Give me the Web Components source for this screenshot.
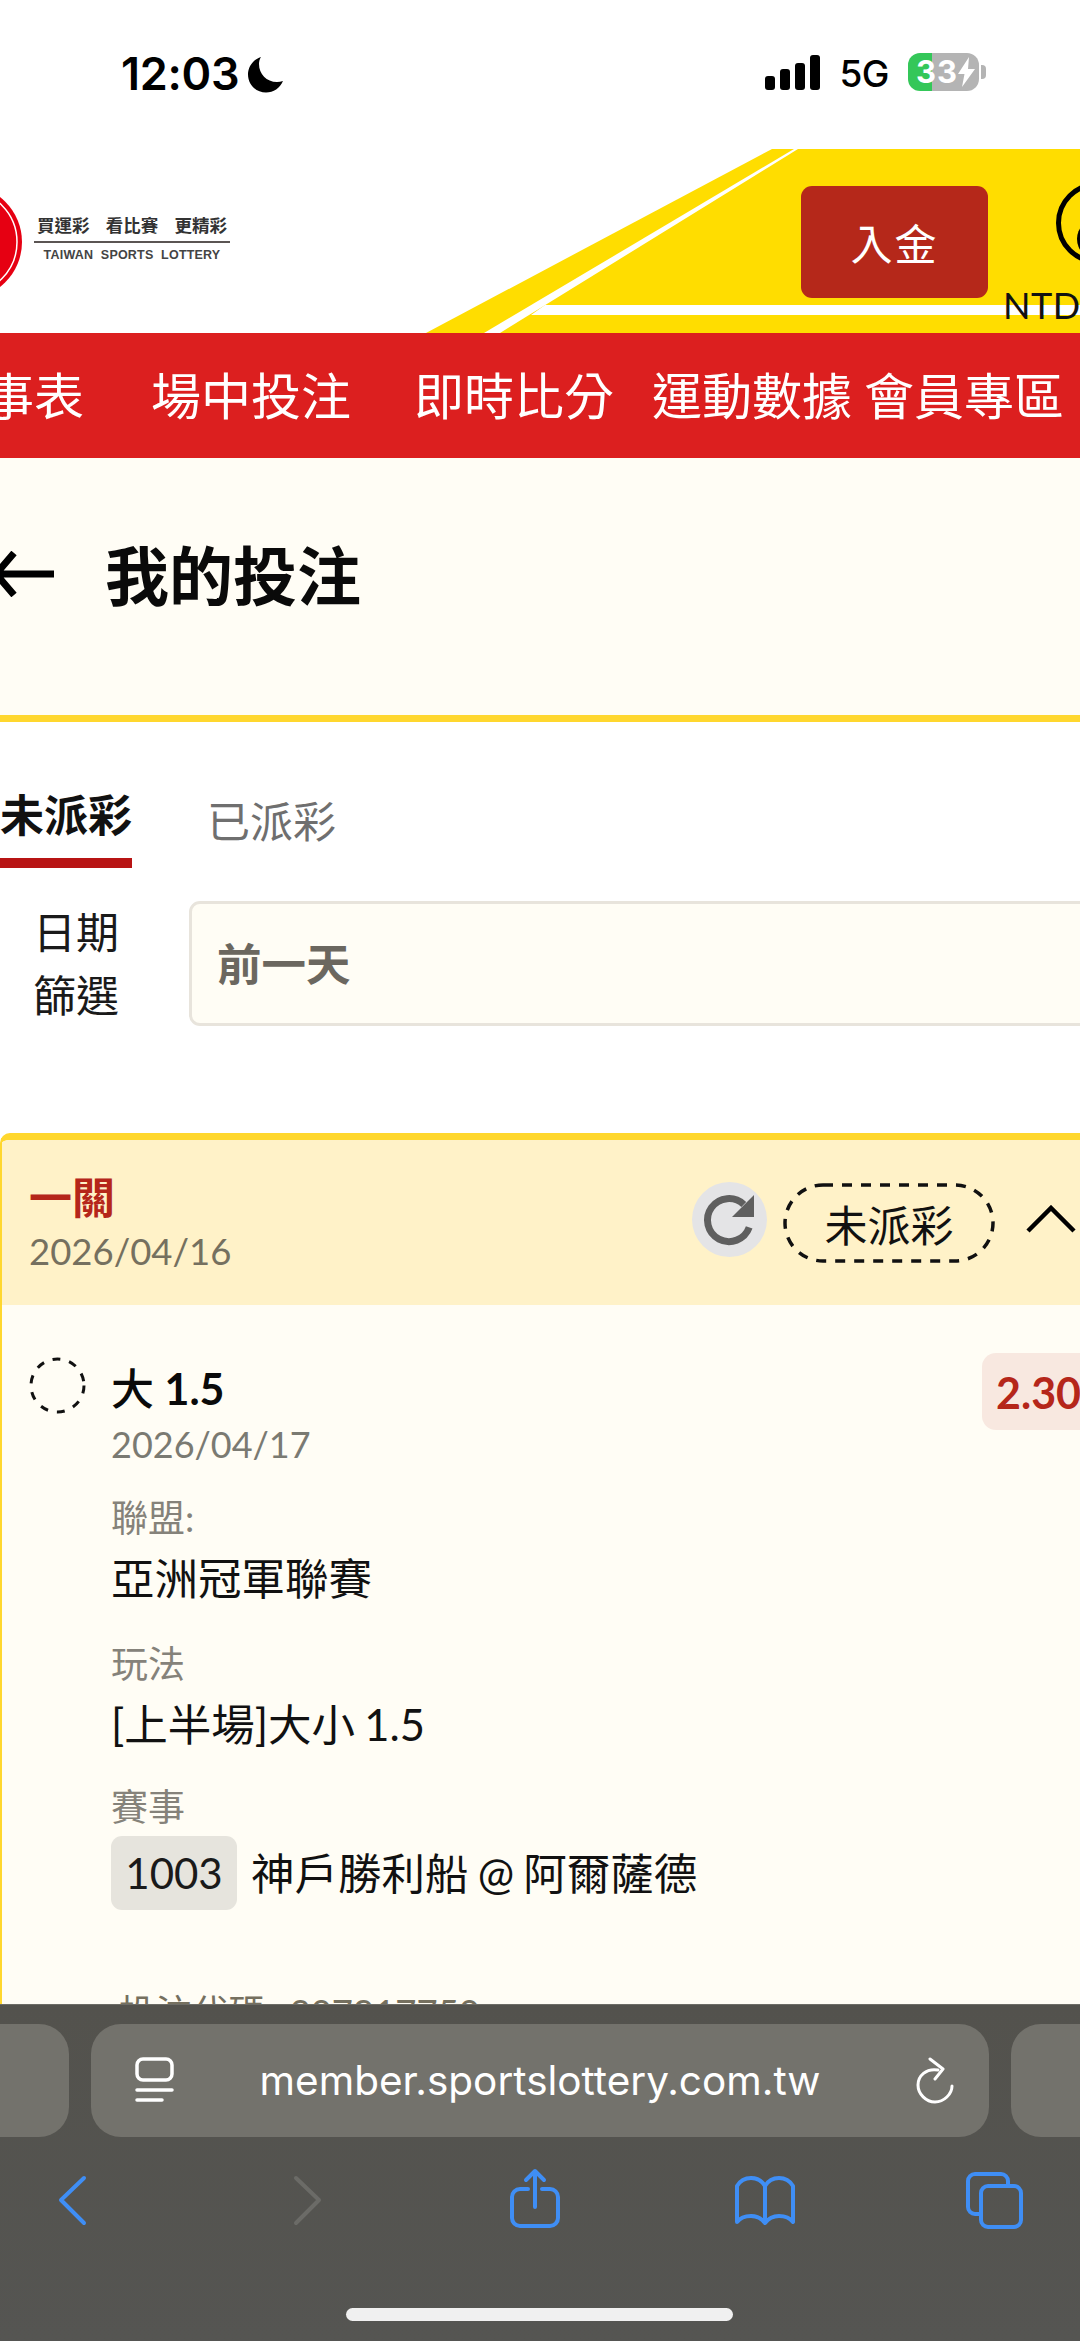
<!DOCTYPE html>
<html lang="zh-Hant">
<head>
<meta charset="utf-8">
<title>我的投注</title>
<style>
  html, body { margin: 0; padding: 0; width: 1080px; height: 2341px; overflow: hidden; background: #ffffff; }
  body { font-family: Lato, "Noto Sans CJK TC", sans-serif; color: #000; }
  my-bets-page { --cream: #fffdf5; --red: #b5261a; }
</style>
</head>
<body>
<my-bets-page>
  <status-bar></status-bar>
  <site-header></site-header>
  <main-nav></main-nav>
  <page-title>我的投注</page-title>
  <bet-tabs></bet-tabs>
  <date-filter></date-filter>
  <bet-card>
    <bet-leg>
      <bet-field gap="24" label="聯盟:" >亞洲冠軍聯賽</bet-field>
      <bet-field gap="30" label="玩法">[上半場]大小 1.5</bet-field>
      <bet-field gap="27" label="賽事"><match-line code="1003">神戶勝利船 @ 阿爾薩德</match-line></bet-field>
      <bet-code><span>投注代碼:</span> 307917750</bet-code>
    </bet-leg>
  </bet-card>
</my-bets-page>
<safari-bar></safari-bar>

<script>
(() => {
  // small helper, every element is the same: open shadow root + static html
  const define = (name, html) => {
    class El extends HTMLElement {
      constructor() {
        super();
        this.attachShadow({ mode: "open" });
        this.shadowRoot.innerHTML = html;
      }
    }
    customElements.define(name, El);
  };

  define("my-bets-page", `
    <style>
      :host { display: block; width: 1080px; height: 2341px; overflow: hidden; }
    </style>
    <slot></slot>
  `);

  define("status-bar", `
    <style>
      :host { display: flex; align-items: flex-start; height: 149px; box-sizing: border-box; padding: 0 94px 0 121px; font-family: Inter, Roboto, sans-serif; }
      .time { font-size: 45px; font-weight: 600; line-height: 46px; margin-top: 51px; letter-spacing: -0.3px; }
      .moon { margin: 57px 0 0 9px; }
      .right { margin-left: auto; display: flex; align-items: flex-start; }
      .signal { margin-top: 55px; }
      .net { font-size: 37px; font-weight: 500; line-height: 40px; margin: 54px 0 0 18px; letter-spacing: -0.5px; }
      .battery { display: flex; align-items: center; box-sizing: border-box; width: 71px; height: 38px; margin: 53px 0 0 19px; padding-left: 8px; border-radius: 12px; background: linear-gradient(90deg, #34c759 24px, #b4b4b4 24px); color: #fff; font-size: 31px; font-weight: 700; line-height: 38px; letter-spacing: 1px; }
      .tip { width: 5px; height: 14px; margin: 65px 0 0 2px; border-radius: 0 4px 4px 0; background: #b4b4b4; }
    </style>
    <span class="time">12:03</span>
    <svg class="moon" width="36" height="36" viewBox="0 0 36 36"><path d="M13 0C5 2.500 0 9.500 0 17.500 0 27.500 8 35.500 18 35.500c7.500 0 14-4.500 17-11.500-2 .7-4 1-6 1C18.500 25 11 17 11 7c0-2.500.7-5 2-7z"/></svg>
    <span class="right">
      <svg class="signal" width="56" height="35" viewBox="0 0 56 35"><rect x="0" y="21" width="10" height="14" rx="3"/><rect x="15" y="14" width="10" height="21" rx="3"/><rect x="30" y="8" width="10" height="27" rx="3"/><rect x="45" y="0" width="10" height="35" rx="3"/></svg>
      <span class="net">5G</span>
      <span class="battery">33<svg width="17" height="30" viewBox="0 0 17 30"><path d="M11 0 0 17h6.500L4 30 17 12h-7z" fill="#fff"/></svg></span>
      <span class="tip"></span>
    </span>
  `);

  define("site-header", `
    <style>
      :host { display: flex; position: relative; align-items: flex-start; width: 1080px; height: 184px; overflow: hidden; background: #fff; }
      .bg { position: absolute; left: 0; top: 0; }
      .mark { position: relative; flex: none; margin-top: 48px; }
      .slogan { position: relative; flex: none; width: 196px; margin: 67px 0 0 11px; color: #333; font-family: "Liberation Sans", sans-serif; }
      .zh { display: flex; justify-content: space-between; padding: 0 3px; font: 700 17.500px/18px "Noto Sans CJK TC", sans-serif; }
      .rule { height: 2px; margin-top: 7px; background: #5b5553; }
      .en { margin-top: 5px; font-size: 12.500px; font-weight: 700; line-height: 14px; text-align: center; white-space: nowrap; letter-spacing: .2px; word-spacing: 4px; color: #444; }
      button { position: relative; flex: none; width: 187px; height: 112px; margin: 37px 0 0 571px; padding: 0; border: 0; border-radius: 11px; background: #b5281a; color: #fff; font: 400 42px/112px "Noto Sans CJK TC", sans-serif; letter-spacing: 2px; }
      .account { position: relative; flex: none; width: 200px; margin: 32px 0 0 15px; }
      .account svg { display: block; margin-left: 53px; }
      .ntd { margin-top: 22px; font: 400 36px/36px Lato, sans-serif; color: #111; letter-spacing: .5px; }
    </style>
    <svg class="bg" width="1080" height="184" viewBox="0 0 1080 184">
      <polygon points="772,0 1080,0 1080,184 426,184" fill="#ffdd00"/>
      <polygon points="794,0 798,0 500,184 484,184" fill="#fff"/>
      <polygon points="545,156 1080,156 1080,166 531,166" fill="#fff"/>
    </svg>
    <svg class="mark" width="23" height="90" viewBox="0 0 23 90">
      <circle cx="-35" cy="45" r="57" fill="#e60012"/>
      <circle cx="-35" cy="45" r="52" fill="none" stroke="#fff" stroke-width="1.500"/>
    </svg>
    <div class="slogan">
      <div class="zh"><span>買運彩</span><span>看比賽</span><span>更精彩</span></div>
      <div class="rule"></div>
      <div class="en">TAIWAN SPORTS LOTTERY</div>
    </div>
    <button type="button">入金</button>
    <div class="account">
      <svg width="84" height="84" viewBox="0 0 84 84"><circle cx="41" cy="42" r="38.500" fill="none" stroke="#000" stroke-width="5"/><circle cx="41" cy="58" r="20" fill="#000"/></svg>
      <div class="ntd">NTD</div>
    </div>
  `);

  define("main-nav", `
    <style>
      :host { display: flex; align-items: center; width: 1080px; height: 125px; box-sizing: border-box; padding-bottom: 6px; overflow: hidden; background: #dc1f1f; color: #fff; font: 400 50px/1 "Noto Sans CJK TC", sans-serif; white-space: nowrap; }
      span { flex: none; }
      .a { margin-left: -66px; }
      .b { margin-left: 67px; }
      .c { margin-left: 63px; }
      .d { margin-left: 38px; }
      .e { margin-left: 12px; }
    </style>
    <span class="a">賽事表</span>
    <span class="b">場中投注</span>
    <span class="c">即時比分</span>
    <span class="d">運動數據</span>
    <span class="e">會員專區</span>
  `);

  define("page-title", `
    <style>
      :host { display: flex; align-items: center; height: 264px; box-sizing: border-box; padding-bottom: 29px; background: var(--cream); border-bottom: 7px solid #ffd72e; }
      svg { flex: none; margin: 3px 0 0 -6px; }
      h1 { margin: 0 0 0 51px; font: 700 64px/1.2 "Noto Sans CJK TC", sans-serif; color: #0a0a0a; }
    </style>
    <svg width="60" height="46" viewBox="0 0 60 46"><path d="M60 23H4M20 2 2 23l18 21" fill="none" stroke="#000" stroke-width="7"/></svg>
    <h1><slot></slot></h1>
  `);

  define("bet-tabs", `
    <style>
      :host { display: flex; align-items: flex-start; height: 146px; box-sizing: border-box; padding-top: 60px; font-family: "Noto Sans CJK TC", sans-serif; font-size: 43px; line-height: 62px; }
      .on { width: 132px; height: 86px; box-sizing: border-box; border-bottom: 10px solid #b81414; font-size: 44px; font-weight: 700; color: #111; white-space: nowrap; }
      .off { margin: 6px 0 0 75px; color: #6f6f6f; }
    </style>
    <span class="on">未派彩</span>
    <span class="off">已派彩</span>
  `);

  define("date-filter", `
    <style>
      :host { display: flex; align-items: center; width: 1080px; margin-top: 31px; overflow: hidden; font-family: "Noto Sans CJK TC", sans-serif; }
      .label { flex: none; width: 152px; padding-bottom: 2px; font-size: 43px; line-height: 63px; text-align: center; color: #1a1a1a; }
      .select { flex: none; display: flex; align-items: center; justify-content: space-between; box-sizing: border-box; width: 920px; height: 125px; margin-left: 37px; padding: 0 0 4px 25px; border: 3px solid #e8e4dc; border-radius: 11px; background: var(--cream); color: #6b675f; font-size: 44.500px; font-weight: 700; }
      svg { flex: none; margin-right: -14px; margin-top: 8px; }
    </style>
    <div class="label">日期<br>篩選</div>
    <div class="select"><span>前一天</span><svg width="38" height="22" viewBox="0 0 38 22"><path d="M3 3l16 16L35 3" fill="none" stroke="#66625a" stroke-width="5"/></svg></div>
  `);

  define("bet-card", `
    <style>
      :host { display: block; width: 1082px; height: 880px; box-sizing: border-box; margin-top: 106px; overflow: hidden; background: var(--cream); border-top: 7px solid #ffd72e; border-left: 2px solid #ffd72e; border-top-left-radius: 10px; }
      header { display: flex; align-items: flex-start; height: 165px; box-sizing: border-box; padding-left: 27px; background: #fff2c8; }
      .title { flex: none; font: 700 43px/58px "Noto Sans CJK TC", sans-serif; color: var(--red); margin-top: 26px; }
      .date { margin-top: 2px; font: 400 36.500px/50px Lato, sans-serif; color: #75705f; }
      .left { flex: 1; }
      .refresh { flex: none; width: 75px; height: 75px; margin-top: 42px; border-radius: 50%; background: #e4e4e6; }
      .pill { flex: none; display: grid; place-items: center; width: 212px; height: 80px; margin: 43px 0 0 16px; font: 400 43px/1 "Noto Sans CJK TC", sans-serif; color: #111; }
      .pill > * { grid-area: 1 / 1; }
      .up { flex: none; margin: 65px 6px 0 31px; }
      svg { display: block; }
      .body { padding: 48px 0 0 27px; }
    </style>
    <header>
      <div class="left"><div class="title">一關</div><div class="date">2026/04/16</div></div>
      <div class="refresh"><svg width="75" height="75" viewBox="0 0 75 75"><path d="M57.200 45.400A21.500 21.500 0 1 1 51.800 22.500" fill="none" stroke="#5f5f5f" stroke-width="7"/><path d="M62 13v22H40z" fill="#5f5f5f"/></svg></div>
      <div class="pill"><svg width="212" height="80" viewBox="0 0 212 80"><rect x="2" y="2" width="208" height="76" rx="38" fill="none" stroke="#111" stroke-width="3.500" stroke-dasharray="10 9"/></svg><span>未派彩</span></div>
      <svg class="up" width="50" height="28" viewBox="0 0 50 28"><path d="M2 26 25 3l23 23" fill="none" stroke="#000" stroke-width="4.500"/></svg>
    </header>
    <div class="body"><slot></slot></div>
  `);

  define("bet-leg", `
    <style>
      :host { display: flex; align-items: flex-start; font-family: Lato, "Noto Sans CJK TC", sans-serif; }
      .dot { flex: none; width: 58px; height: 58px; margin: 4px 24px 0 0; }
      .main { flex: 1; min-width: 0; padding-top: 2px; }
      .pick { font-size: 43px; font-weight: 700; line-height: 62px; color: #0a0a0a; white-space: nowrap; }
      .pick span { font-family: "Noto Sans CJK TC", sans-serif; font-weight: 500; }
      .date { margin-bottom: 1px; font-size: 36px; line-height: 49px; color: #7a7a72; }
      .odds { flex: none; box-sizing: border-box; width: 130px; height: 77px; margin-right: -30px; padding-left: 14px; border-radius: 14px 0 0 14px; background: #f8e8e0; color: var(--red); font-size: 43px; font-weight: 700; line-height: 79px; white-space: nowrap; }
    </style>
    <svg class="dot" viewBox="0 0 58 58"><circle cx="28.500" cy="28.500" r="26.500" fill="none" stroke="#111" stroke-width="3" stroke-dasharray="8 9"/></svg>
    <div class="main">
      <div class="pick"><span>大</span> 1.5</div>
      <div class="date">2026/04/17</div>
      <slot></slot>
    </div>
    <div class="odds">2.30</div>
  `);

  class BetField extends HTMLElement {
    constructor() {
      super();
      this.attachShadow({ mode: "open" });
      this.shadowRoot.innerHTML = `
        <style>
          :host { display: block; }
          .label { font-size: 37px; line-height: 50px; color: #85827a; }
          .value { margin-top: 4px; font-size: 43.500px; line-height: 62px; color: #111; white-space: nowrap; word-spacing: -2px; }
        </style>
        <div class="label"></div>
        <div class="value"><slot></slot></div>
      `;
    }
    connectedCallback() {
      this.shadowRoot.querySelector(".label").textContent = this.getAttribute("label") || "";
      this.style.marginTop = (this.getAttribute("gap") || 0) + "px";
    }
  }
  customElements.define("bet-field", BetField);

  class MatchLine extends HTMLElement {
    constructor() {
      super();
      this.attachShadow({ mode: "open" });
      this.shadowRoot.innerHTML = `
        <style>
          :host { display: flex; align-items: center; gap: 14px; height: 74px; }
          .code { flex: none; width: 126px; height: 74px; border-radius: 11px; background: #e6e4dd; text-align: center; font-size: 42px; line-height: 75px; color: #1a1a1a; }
        </style>
        <span class="code"></span><span><slot></slot></span>
      `;
    }
    connectedCallback() {
      this.shadowRoot.querySelector(".code").textContent = this.getAttribute("code");
    }
  }
  customElements.define("match-line", MatchLine);

  define("bet-code", `
    <style>
      :host { display: block; margin-top: 77px; padding-left: 8px; font-size: 36.500px; line-height: 50px; color: #75705f; white-space: nowrap; word-spacing: 6px; }
    </style>
    <slot></slot>
  `);

  define("safari-bar", `
    <style>
      :host { position: fixed; left: 0; bottom: 0; display: flex; flex-direction: column; width: 1080px; height: 337px; box-sizing: border-box; padding-top: 19px; overflow: hidden; background: linear-gradient(#53524d, #555552); border-top: 1px solid #6d6c66; font-family: Inter, Roboto, sans-serif; }
      .pills { display: flex; gap: 22px; height: 113px; margin-left: -40px; width: 1160px; }
      .side { flex: none; width: 109px; border-radius: 30px; background: #73726c; }
      .url { flex: none; display: flex; align-items: center; box-sizing: border-box; width: 898px; border-radius: 30px; background: #73726c; color: #fff; padding: 0 32px 0 44px; font-size: 40.500px; white-space: nowrap; }
      .url .addr { flex: 1; text-align: center; padding-right: 10px; }
      .url svg { flex: none; }
      .tools { display: grid; grid-template-columns: repeat(5, 230.500px); height: 70px; margin: 28px 0 0 -43px; justify-items: center; }
      .home { width: 387px; height: 13px; margin: 73px 0 0 346px; border-radius: 7px; background: #f0f0f0; }
      .blue { fill: none; stroke: #3f8ef5; stroke-width: 4; stroke-linecap: round; stroke-linejoin: round; }
    </style>
    <div class="pills">
      <div class="side"></div>
      <div class="url">
        <svg width="40" height="48" viewBox="0 0 40 48"><g fill="none" stroke="#fff" stroke-width="3.500" stroke-linecap="round"><rect x="2" y="2" width="35" height="21" rx="6"/><path d="M2 33h35M2 43h25"/></g></svg>
        <span class="addr">member.sportslottery.com.tw</span>
        <svg width="42" height="48" viewBox="0 0 42 48"><g fill="none" stroke="#fff" stroke-width="3" stroke-linecap="round" stroke-linejoin="round"><path d="M23 13C11 11 3 19 3 28c0 9 8 17 17 17s17-8 17-16"/><path d="M15 2l13 10-8 10"/></g></svg>
      </div>
      <div class="side"></div>
    </div>
    <div class="tools">
      <svg width="80" height="70" viewBox="32 2165 80 70"><path class="blue" d="M84 2178l-23 22 23 23"/></svg>
      <svg width="80" height="70" viewBox="263 2165 80 70"><path d="M296 2178l23 22-23 23" fill="none" stroke="#6b6b67" stroke-width="4" stroke-linecap="round" stroke-linejoin="round"/></svg>
      <svg width="80" height="70" viewBox="493 2165 80 70"><path class="blue" d="M528 2189h-8a8 8 0 0 0-8 8v21a8 8 0 0 0 8 8h30a8 8 0 0 0 8-8v-21a8 8 0 0 0-8-8h-8M535 2207v-36M526 2180l9-9 9 9"/></svg>
      <svg width="80" height="70" viewBox="724 2165 80 70"><path class="blue" d="M765 2186c-3-5-8-8-14-8-6 0-11 3-14 8v36c3-4 8-6 14-6 6 0 11 3 14 7 3-4 8-7 14-7 6 0 11 2 14 6v-36c-3-5-8-8-14-8-6 0-11 3-14 8zv36"/></svg>
      <svg width="80" height="70" viewBox="954 2165 80 70"><g class="blue"><path d="M1008 2185v-4a7 7 0 0 0-7-7h-26a7 7 0 0 0-7 7v26a7 7 0 0 0 7 7h5"/><rect x="981" y="2186" width="40" height="41" rx="7"/></g></svg>
    </div>
    <div class="home"></div>
  `);
})();
</script>
</body>
</html>
